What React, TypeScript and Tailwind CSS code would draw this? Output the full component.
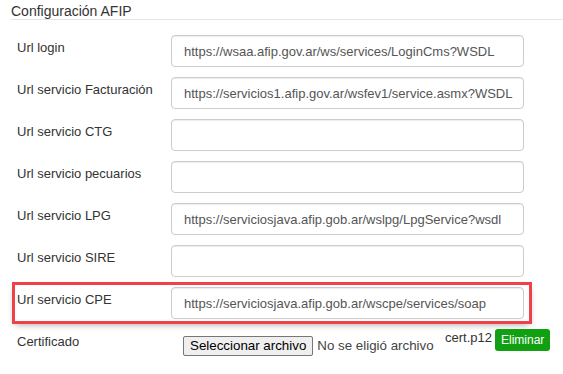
import React from 'react';

interface Campo {
  label: string;
  value: string;
  highlight?: boolean;
}

const CAMPOS: Campo[] = [
  { label: 'Url login', value: 'https://wsaa.afip.gov.ar/ws/services/LoginCms?WSDL' },
  { label: 'Url servicio Facturación', value: 'https://servicios1.afip.gov.ar/wsfev1/service.asmx?WSDL' },
  { label: 'Url servicio CTG', value: '' },
  { label: 'Url servicio pecuarios', value: '' },
  { label: 'Url servicio LPG', value: 'https://serviciosjava.afip.gob.ar/wslpg/LpgService?wsdl' },
  { label: 'Url servicio SIRE', value: '' },
  { label: 'Url servicio CPE', value: 'https://serviciosjava.afip.gob.ar/wscpe/services/soap', highlight: true },
];

const FilaCampo: React.FC<{ campo: Campo }> = ({ campo }) => {
  const base = 'flex items-start ml-[15px] w-[514px] pl-[2px]';
  const cls = campo.highlight
    ? `${base} -my-[2px] py-[2px] ring-[3px] ring-[#ef4147] shadow-[0_3px_7px_rgba(0,0,0,0.4)]`
    : base;

  return (
    <div className={cls}>
      <label className="w-[154px] shrink-0 pt-[4px] leading-[18px] text-[13px] text-[#333]">
        {campo.label}
      </label>
      <input
        type="text"
        readOnly
        value={campo.value}
        className="w-[353px] h-[32px] pl-[12px] pr-[2px] border border-[#ccc] rounded-[4px] bg-white text-[13px] text-[#555] shadow-[inset_0_1px_1px_rgba(0,0,0,0.075)] outline-none"
      />
    </div>
  );
};

export default function App() {
  return (
    <div className="w-[563px] h-[374px] bg-white overflow-hidden font-['Liberation_Sans',Arial,sans-serif]">
      <div className="ml-[11px] pt-[3px] leading-[16px] text-[14px] text-[#333] border-b border-[#e5e5e5]">
        Configuración AFIP
      </div>

      <div className="mt-[15px] flex flex-col gap-[10px]">
        {CAMPOS.map((c) => (
          <FilaCampo key={c.label} campo={c} />
        ))}

        <div className="flex items-start ml-[15px] w-[514px] pl-[2px]">
          <label className="w-[154px] shrink-0 pt-[4px] leading-[18px] text-[13px] text-[#333]">
            Certificado
          </label>
          <div className="flex items-start pl-[12px]">
            <div className="mt-[7px] flex items-center w-[262px]">
              <button
                type="button"
                className="h-[20px] px-[6px] border border-[#767676] rounded-[2px] bg-[#efefef] text-[13.33px] leading-[18px] text-black"
              >
                Seleccionar archivo
              </button>
              <span className="ml-[4px] text-[13.33px] leading-[18px] text-[#444]">No se eligió archivo</span>
            </div>
            <span className="text-[13px] leading-[18px] text-[#333]">cert.p12</span>
            <button
              type="button"
              className="ml-[3px] h-[22px] px-[6px] rounded-[3px] bg-[#11a011] text-white text-[12px] leading-[16px]"
            >
              Eliminar
            </button>
          </div>
        </div>
      </div>
    </div>
  );
}
